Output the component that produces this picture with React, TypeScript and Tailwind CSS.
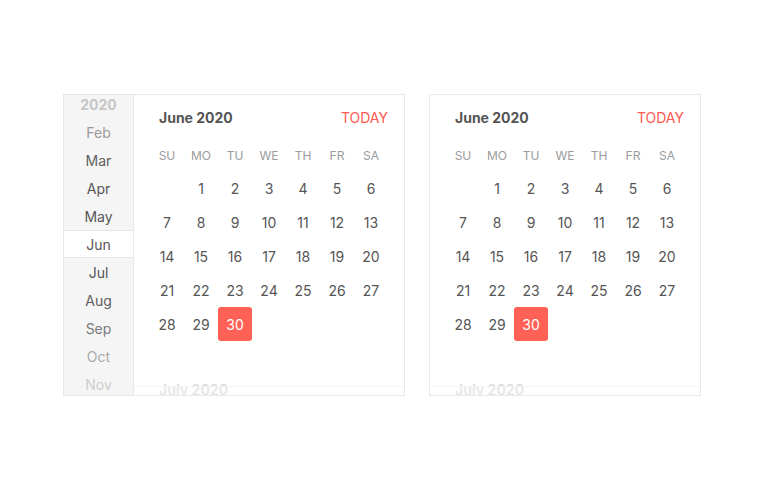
import React from "react";

const WEEKDAYS = ["SU", "MO", "TU", "WE", "TH", "FR", "SA"];

// June 2020 starts on a Monday
const JUNE: (number | null)[] = [null, ...Array.from({ length: 30 }, (_, i) => i + 1)];

const MONTHS: { label: string; cls: string; active?: boolean }[] = [
  { label: "2020", cls: "text-[#c6c6c6] font-bold" },
  { label: "Feb", cls: "text-[#9a9a9a]" },
  { label: "Mar", cls: "text-[#606060]" },
  { label: "Apr", cls: "text-[#555]" },
  { label: "May", cls: "text-[#555]" },
  { label: "Jun", cls: "text-[#555]", active: true },
  { label: "Jul", cls: "text-[#555]" },
  { label: "Aug", cls: "text-[#5e5e5e]" },
  { label: "Sep", cls: "text-[#7a7a7a]" },
  { label: "Oct", cls: "text-[#aaa]" },
  { label: "Nov", cls: "text-[#cdcdcd]" },
];

function MonthList() {
  return (
    <div className="w-[70px] h-[300px] shrink-0 bg-[#f5f5f5] border-r border-[#e9e9e9] overflow-hidden">
      <div className="-mt-[5px] flex flex-col">
        {MONTHS.map((m) => (
          <div
            key={m.label}
            className={
              "h-[28px] shrink-0 flex items-center justify-center text-[14px] " +
              m.cls +
              (m.active ? " bg-white border-y border-[#e6e6e6]" : "")
            }
          >
            {m.label}
          </div>
        ))}
      </div>
    </div>
  );
}

function Calendar() {
  return (
    <div className="relative w-[270px] h-[300px] overflow-hidden bg-white">
      <div className="flex items-center justify-between pt-[14px] pl-[25px] pr-[16px] h-[32px]">
        <span className="text-[14px] font-bold text-[#555] leading-[18px]">June 2020</span>
        <span className="text-[14px] text-[#ff5a52] leading-[18px]">TODAY</span>
      </div>
      <div className="px-[16px] mt-[12px]">
        <div className="grid grid-cols-7 h-[33px] items-center">
          {WEEKDAYS.map((d) => (
            <div key={d} className="text-center text-[12px] text-[#9b9b9b]">
              {d}
            </div>
          ))}
        </div>
        <div className="grid grid-cols-7 -mt-[1px]">
          {JUNE.map((d, i) => (
            <div key={i} className="h-[34px] flex items-center justify-center">
              {d === 30 ? (
                <div className="w-[34px] h-[34px] rounded-[3px] bg-[#ff6157] text-white text-[14px] flex items-center justify-center">
                  30
                </div>
              ) : (
                <span className="text-[14px] text-[#555]">{d ?? ""}</span>
              )}
            </div>
          ))}
        </div>
      </div>
      <div className="mt-[40px] pl-[25px] text-[14px] font-bold text-[#dedede] leading-[18px]">
        July 2020
      </div>
      <div className="absolute left-0 right-0 bottom-0 h-[9px] border-t border-[#f4f4f4] bg-white/30" />
    </div>
  );
}

export default function App() {
  return (
    <div
      className="w-[770px] h-[492px] bg-white flex items-start gap-[24px] pl-[63px] pt-[94px]"
      style={{ fontFamily: "Inter, 'Noto Sans', sans-serif" }}
    >
      <div className="flex border border-[#e8e8e8]">
        <MonthList />
        <Calendar />
      </div>
      <div className="flex border border-[#e8e8e8]">
        <Calendar />
      </div>
    </div>
  );
}
